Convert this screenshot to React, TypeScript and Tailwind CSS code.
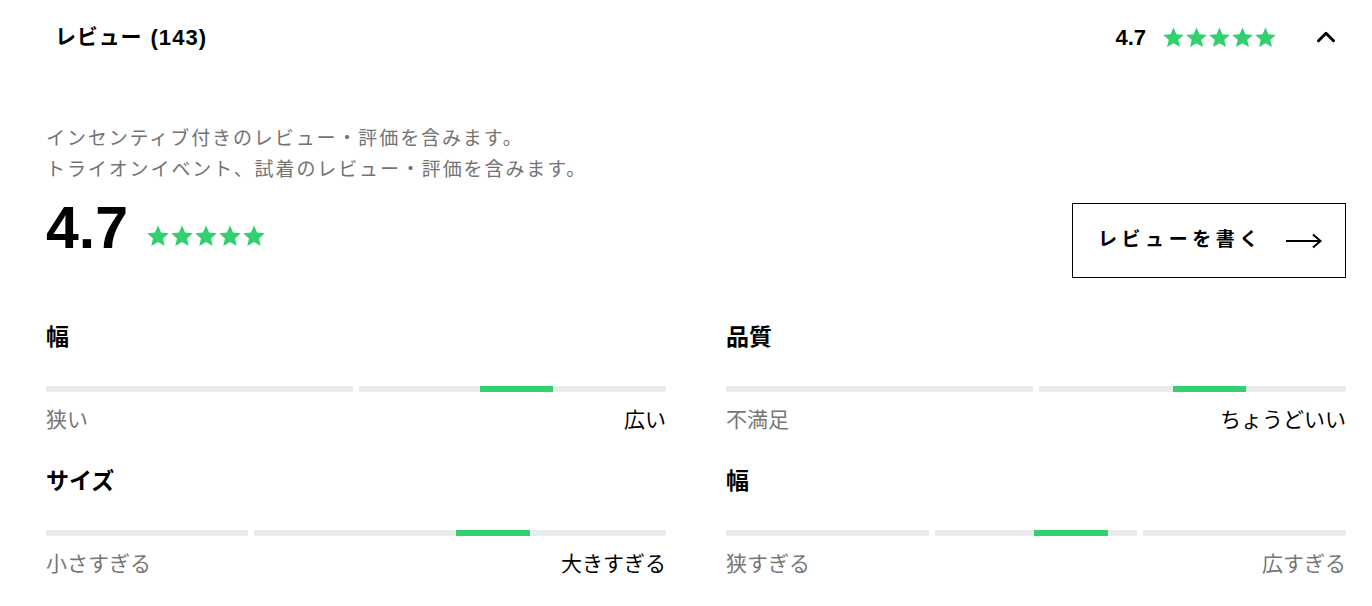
import { ChevronUp } from 'lucide-react';

const font = "font-['Liberation_Sans','Noto_Sans_CJK_JP',sans-serif]";

function Star({ size }: { size: number }) {
  return (
    <svg width={size} height={size} viewBox="0 0 24 24" className="shrink-0">
      <path
        d="M12 1.5l3.1 7.1 7.7.7-5.8 5.1 1.7 7.6L12 18l-6.7 4 1.7-7.6L1.2 9.3l7.7-.7z"
        fill="#33d06f"
      />
    </svg>
  );
}

function Stars({ size }: { size: number }) {
  return (
    <div className="flex">
      {[0, 1, 2, 3, 4].map((i) => (
        <Star key={i} size={size} />
      ))}
    </div>
  );
}

type Segment = { width?: string; green?: { left: number; width: number } };

function Meter({
  title,
  segments,
  left,
  right,
  rightDark,
}: {
  title: string;
  segments: Segment[];
  left: string;
  right: string;
  rightDark?: boolean;
}) {
  return (
    <div>
      <div className="text-[23px] leading-[30px] font-bold text-black">{title}</div>
      <div className="mt-[34px] flex gap-[6px]">
        {segments.map((s, i) => (
          <div key={i} className={`relative h-[6px] bg-[#e9ecef] ${s.width ?? 'flex-1'}`}>
            {s.green && (
              <div
                className="absolute top-0 h-[6px] bg-[#33d06f]"
                style={{ left: s.green.left, width: s.green.width }}
              />
            )}
          </div>
        ))}
      </div>
      <div className="mt-[13px] flex justify-between text-[21px] leading-[30px]">
        <span className="text-[#767676]">{left}</span>
        <span className={rightDark ? 'text-black' : 'text-[#767676]'}>{right}</span>
      </div>
    </div>
  );
}

export default function App() {
  return (
    <div className={`w-[1372px] h-[606px] bg-white text-black ${font}`}>
      {/* Header */}
      <div className="flex h-[74px] items-center justify-between pl-[55px] pr-[31px]">
        <div className="flex items-center text-[21px] font-bold tracking-[0.04em]">
          <span>レビュー</span>
          <span className="ml-[8px] text-[22px] tracking-[0.05em]">(143)</span>
        </div>
        <div className="flex items-center">
          <span className="text-[22px] font-bold">4.7</span>
          <div className="ml-[16px]">
            <Stars size={23} />
          </div>
          <ChevronUp className="ml-[34px] h-[30px] w-[30px]" strokeWidth={2.4} />
        </div>
      </div>

      <div className="pl-[46px] pr-[26px]">
        <div className="mt-[49px] text-[19px] leading-[31px] tracking-[0.1em] text-[#737373]">
          <p>インセンティブ付きのレビュー・評価を含みます。</p>
          <p>トライオンイベント、試着のレビュー・評価を含みます。</p>
        </div>

        <div className="mt-[18px] flex items-start justify-between">
          <div className="flex items-center">
            <span className="text-[59px] font-bold leading-[50px]">4.7</span>
            <div className="ml-[18px] mt-[16px]">
              <Stars size={24} />
            </div>
          </div>
          <button className="flex h-[75px] w-[274px] items-center border border-black pl-[25px] pr-[22px]">
            <span className="text-[19px] font-bold tracking-[0.24em]">レビューを書く</span>
            <svg width="38" height="16" viewBox="0 0 38 16" className="ml-auto">
              <path d="M1 8h35M28 1.5l7.5 6.5-7.5 6.5" stroke="#000" strokeWidth="2" fill="none" />
            </svg>
          </button>
        </div>

        <div className="mt-[44px] grid grid-cols-2 gap-x-[60px] gap-y-[31px]">
          <Meter
            title="幅"
            segments={[{}, { green: { left: 121, width: 73 } }]}
            left="狭い"
            right="広い"
            rightDark
          />
          <Meter
            title="品質"
            segments={[{}, { green: { left: 134, width: 73 } }]}
            left="不満足"
            right="ちょうどいい"
            rightDark
          />
          <Meter
            title="サイズ"
            segments={[{ width: 'w-[202px]' }, { green: { left: 202, width: 74 } }]}
            left="小さすぎる"
            right="大きすぎる"
            rightDark
          />
          <Meter
            title="幅"
            segments={[{}, { green: { left: 99, width: 74 } }, {}]}
            left="狭すぎる"
            right="広すぎる"
          />
        </div>
      </div>
    </div>
  );
}
